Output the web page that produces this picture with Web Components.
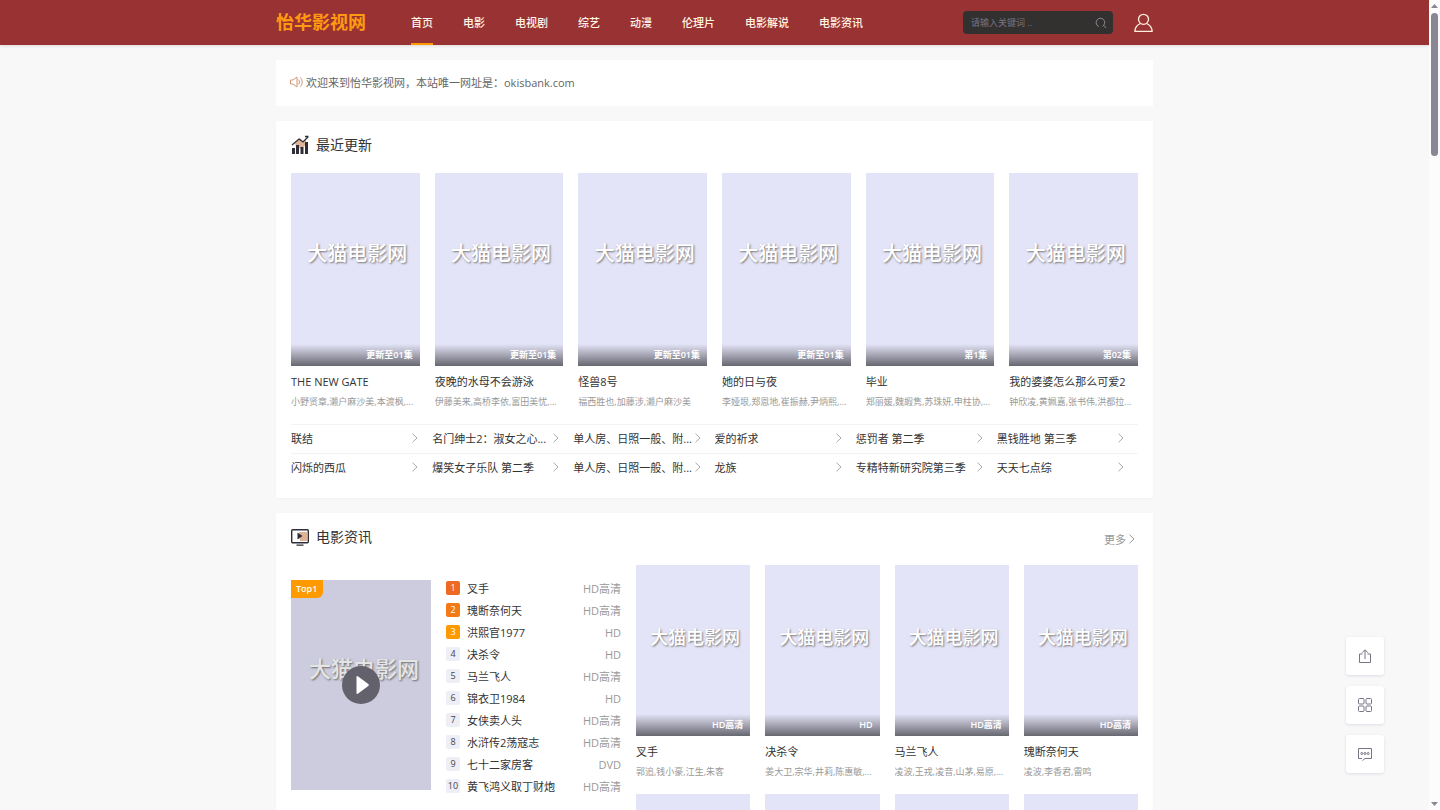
<!DOCTYPE html>
<html lang="zh-CN">
<head>
<meta charset="utf-8">
<title>怡华影视网</title>
<style>
  html { scrollbar-width: none; }
  body {
    margin: 0;
    padding-right: 11px;
    background: #f8f8f8;
    color: #333;
    font: 11px/15px "Open Sans", "Noto Sans CJK SC", sans-serif;
  }
  main {
    display: grid;
    gap: 15px;
    max-width: 877px;
    margin: 15px auto;
  }
  .six { display: grid; grid-template-columns: repeat(6, minmax(0, 1fr)); gap: 15px; --mark: 20px; }
  .four { display: grid; grid-template-columns: repeat(4, minmax(0, 1fr)); gap: 15px; --mark: 18px; }
  .split { display: grid; grid-template-columns: minmax(0, 165fr) minmax(0, 251fr); gap: 15px; }
</style>
</head>
<body>
<site-header></site-header>
<main>
  <notice-bar>欢迎来到怡华影视网，本站唯一网址是：okisbank.com</notice-bar>

  <content-panel heading="最近更新">
    <svg slot="icon" width="18" height="20" viewBox="0 0 18 20">
      <path d="M4 8L9 3l3 3 3-2v6l-5 4-5-2z" fill="#deb396"/>
      <path d="M1 13h3v6H1zM5 10h3v9H5zM9.500 12h3v7h-3zM14 7h3v12h-3z" fill="#2f2e38"/>
      <path d="M1 10L8 4l4 3 5-5M14 1.500h3.500" fill="none" stroke="#2f2e38" stroke-width="1.300"/>
    </svg>
    <div class="six">
      <movie-card name="THE NEW GATE" cast="小野贤章,濑户麻沙美,本渡枫,..." tag="更新至01集"></movie-card>
      <movie-card name="夜晚的水母不会游泳" cast="伊藤美来,高桥李依,富田美忧,..." tag="更新至01集"></movie-card>
      <movie-card name="怪兽8号" cast="福西胜也,加藤涉,濑户麻沙美" tag="更新至01集"></movie-card>
      <movie-card name="她的日与夜" cast="李娅垠,郑恩地,崔振赫,尹炳熙,..." tag="更新至01集"></movie-card>
      <movie-card name="毕业" cast="郑丽媛,魏嘏隽,苏珠妍,申柱协,..." tag="第1集"></movie-card>
      <movie-card name="我的婆婆怎么那么可爱2" cast="钟欣凌,黄姵嘉,张书伟,洪都拉..." tag="第02集"></movie-card>
    </div>
    <link-grid></link-grid>
  </content-panel>

  <content-panel heading="电影资讯" more="更多">
    <svg slot="icon" width="18" height="20" viewBox="0 0 18 20">
      <path d="M8 5h8v9H9z" fill="#deb396"/>
      <rect x="0.700" y="2.700" width="16.600" height="13" rx="1" fill="none" stroke="#2f2e38" stroke-width="1.400"/>
      <path d="M6.500 5.500v7l5-3.500zM5.500 17.500h7v1.300h-7z" fill="#2f2e38"/>
    </svg>
    <div class="split">
      <rank-list></rank-list>
      <div class="four">
        <movie-card name="叉手" cast="郭追,钱小豪,江生,朱客" tag="HD高清"></movie-card>
        <movie-card name="决杀令" cast="姜大卫,宗华,井莉,陈惠敏,..." tag="HD"></movie-card>
        <movie-card name="马兰飞人" cast="凌波,王戎,凌音,山茅,易原,..." tag="HD高清"></movie-card>
        <movie-card name="瑰断奈何天" cast="凌波,李香君,雷鸣" tag="HD高清"></movie-card>
        <poster-image></poster-image>
        <poster-image></poster-image>
        <poster-image></poster-image>
        <poster-image></poster-image>
      </div>
    </div>
  </content-panel>
</main>
<side-tools></side-tools>
<scroll-track></scroll-track>

<script>
const define = (name, render) => customElements.define(name, class extends HTMLElement {
  constructor() {
    super();
    this.attachShadow({ mode: "open" });
  }
  connectedCallback() {
    const template = document.createElement("template");
    template.innerHTML = render(this);
    this.shadowRoot.replaceChildren(template.content.cloneNode(true));
  }
});
const chevron = '<svg width="6" height="10" viewBox="0 0 6 10" fill="none" stroke="currentColor" aria-hidden="true"><path d="M0.500 0.700L5 5 0.500 9.300"/></svg>';

define("site-header", () => `
  <style>
    :host { display: block; background: #993333; box-shadow: 0 1px 3px rgba(0,0,0,.12); }
    .row { display: flex; align-items: center; max-width: 877px; height: 45px; margin: 0 auto; }
    a { color: #fff5e6; text-decoration: none; }
    .logo { color: #ff9911; font-size: 18px; line-height: 45px; font-weight: 700; }
    nav { display: flex; gap: 30px; margin-left: 45px; align-self: stretch; }
    nav a { line-height: 45px; font-weight: 500; box-sizing: border-box; height: 45px; white-space: nowrap; }
    nav a[aria-current] { border-bottom: 2px solid #ff9900; }
    form { display: flex; align-items: center; box-sizing: border-box; width: 150px; height: 23px; margin: 0 21px 0 auto; padding: 0 6px 0 8px; border-radius: 4px; background: #333030; }
    input { flex: 1; min-width: 0; padding: 0; border: 0; outline: 0; background: none; color: #ddd; font: inherit; font-size: 9px; }
    input::placeholder { color: #777482; }
    button { display: flex; padding: 0; border: 0; background: none; color: #8a8794; }
    .user { display: flex; }
  </style>
  <div class="row">
    <a class="logo" href="#">怡华影视网</a>
    <nav>${["首页", "电影", "电视剧", "综艺", "动漫", "伦理片", "电影解说", "电影资讯"]
      .map((t, i) => `<a href="#"${i ? "" : ' aria-current="page"'}>${t}</a>`).join("")}</nav>
    <form role="search">
      <input type="text" aria-label="搜索" placeholder="请输入关键词 ..">
      <button type="button" aria-label="搜索"><svg width="12" height="12" viewBox="0 0 12 12" fill="none" stroke="currentColor"><path d="M4 9.600A4.300 4.300 0 1 1 7.500 9.300M9 8.500l2 2.500"/></svg></button>
    </form>
    <a class="user" href="#" aria-label="用户"><svg width="19" height="20" viewBox="0 0 19 20" fill="none" stroke="#fff0e0" stroke-width="1.300"><circle cx="9.500" cy="6.300" r="5"/><path d="M6.500 10.500C3 12 1 14.500 0.900 18.300h17.200C18 14.500 16 12 12.500 10.500"/></svg></a>
  </div>`);

define("notice-bar", () => `
  <style>
    :host { display: flex; align-items: center; gap: 3px; height: 44px; padding: 0 14px 2px; background: #fff; color: #666; }
  </style>
  <svg width="13" height="12" viewBox="0 0 13 12" fill="none" stroke="#cf9878" aria-hidden="true"><path d="M0.500 4h2.500l4-3v10l-4-3H0.500zM8.700 3.500q1.800 2.500 0 5M10.500 1.500q3.500 4.500 0 9"/></svg>
  <span><slot></slot></span>`);

define("content-panel", el => `
  <style>
    :host { display: block; padding: 14px 15px 16px; background: #fff; box-shadow: 0 1px 2px rgba(0,0,0,.03); }
    header { display: flex; align-items: center; height: 20px; margin-bottom: 18px; }
    h2 { margin: 0 0 0 7px; font-size: 14px; line-height: 20px; font-weight: 400; color: #333; }
    ::slotted(svg) { display: block; }
    a { display: flex; align-items: center; gap: 3px; margin: 4px 3px 0 auto; color: #999; text-decoration: none; }
  </style>
  <header><slot name="icon"></slot><h2>${el.getAttribute("heading")}</h2>
    ${el.hasAttribute("more") ? `<a href="#">${el.getAttribute("more")}${chevron}</a>` : ""}
  </header>
  <slot></slot>`);

define("poster-image", () => `
  <style>
    :host { display: block; position: relative; aspect-ratio: 2 / 3; background: #e4e4f8; overflow: hidden; }
  </style>
  <slot></slot>`);

define("movie-card", el => `
  <style>
    :host { display: block; min-width: 0; }
    a { color: inherit; text-decoration: none; }
    .mark { position: absolute; top: 42%; left: 4px; right: 0; transform: translateY(-50%); text-align: center; white-space: nowrap;
      color: #fff; font-size: var(--mark); line-height: 28px; font-weight: 500; text-shadow: 1px 1px 2px #777; }
    .tag { position: absolute; left: 0; right: 0; bottom: 0; padding: 0 7px; text-align: right; color: #fff;
      font-size: 9px; line-height: 22px; font-weight: 600; background: linear-gradient(transparent, rgba(0,0,0,.55)); }
    h3, p { margin: 8px 0 0; font-size: 11px; line-height: 15px; font-weight: 400; white-space: nowrap; overflow: hidden; }
    p { margin-top: 5px; font-size: 9px; color: #999; }
  </style>
  <a href="#">
    <poster-image><span class="mark">大猫电影网</span><span class="tag">${el.getAttribute("tag")}</span></poster-image>
    <h3>${el.getAttribute("name")}</h3>
  </a>
  <p>${el.getAttribute("cast")}</p>`);

define("link-grid", () => `
  <style>
    :host { display: block; margin-top: 15px; }
    ul { display: grid; grid-template-columns: repeat(6, minmax(0, 1fr)); margin: 0; padding: 0; list-style: none; }
    a { display: flex; align-items: center; justify-content: space-between; height: 26px; padding: 0 14px 2px 0;
      border-top: 1px solid #f3f3f5; color: #333; text-decoration: none; white-space: nowrap; }
    svg { color: #aaa; flex: none; }
  </style>
  <ul>${["联结", "名门绅士2：淑女之心...", "单人房、日照一般、附...", "爱的祈求", "惩罚者 第二季", "黑钱胜地 第三季",
    "闪烁的西瓜", "爆笑女子乐队 第二季", "单人房、日照一般、附...", "龙族", "专精特新研究院第三季", "天天七点综"]
    .map(t => `<li><a href="#"><span>${t}</span>${chevron}</a></li>`).join("")}</ul>`);

define("rank-list", () => `
  <style>
    :host { display: grid; grid-template-columns: 140px minmax(0, 1fr); gap: 15px; align-items: start; }
    a { color: inherit; text-decoration: none; }
    .top { display: block; margin-top: 15px; }
    .mark { position: absolute; top: 42%; left: 6px; right: 0; transform: translateY(-50%); text-align: center; white-space: nowrap;
      color: #fff; font-size: 22px; line-height: 28px; font-weight: 500; text-shadow: 1px 1px 2px #777; }
    .shade { position: absolute; inset: 0; display: grid; place-items: center; background: rgba(0,0,0,.1); }
    .badge { position: absolute; top: 0; left: 0; padding: 0 6px 0 5px; border-radius: 0 0 6px 0; background: #ff9900; color: #fff; font-size: 9px; line-height: 18px; font-weight: 600; }
    ol { margin: 12px 0 0; padding: 0; list-style: none; }
    li { display: flex; align-items: center; height: 22px; white-space: nowrap; }
    .no { width: 14px; margin-right: 7px; border-radius: 2px; background: #eeeef6; color: #444; text-align: center; font-size: 9px; line-height: 14px; }
    li:nth-child(-n+3) .no { background: #ed6a22; color: #fff; }
    li:nth-child(2) .no { background: #f47a16; }
    li:nth-child(3) .no { background: #ff9900; }
    .kind { margin-left: auto; color: #999; }
  </style>
  <a class="top" href="#" aria-label="叉手">
    <poster-image>
      <span class="mark">大猫电影网</span>
      <span class="shade"><svg width="38" height="38" viewBox="0 0 38 38"><circle cx="19" cy="19" r="19" fill="#62616c"/><path d="M14.500 11v16q0 1.500 1.300.7L26.300 20q1.200-1 0-2L15.800 10.300q-1.300-.8-1.300.7z" fill="#fff"/></svg></span>
      <span class="badge">Top1</span>
    </poster-image>
  </a>
  <ol>${[["叉手", "HD高清"], ["瑰断奈何天", "HD高清"], ["洪熙官1977", "HD"], ["决杀令", "HD"], ["马兰飞人", "HD高清"],
    ["锦衣卫1984", "HD"], ["女侠卖人头", "HD高清"], ["水浒传2荡寇志", "HD高清"], ["七十二家房客", "DVD"], ["黄飞鸿义取丁财炮", "HD高清"]]
    .map(([name, kind], i) => `<li><span class="no">${i + 1}</span><a href="#">${name}</a><span class="kind">${kind}</span></li>`).join("")}</ol>`);

define("side-tools", () => `
  <style>
    :host { position: fixed; right: 56px; bottom: 37px; display: grid; gap: 11px; }
    button { display: grid; place-items: center; width: 38px; height: 38px; padding: 0; border: 0; border-radius: 3px; background: #fff; color: #777584; box-shadow: 0 1px 3px rgba(60,60,120,.14); }
    svg { fill: none; stroke: currentColor; }
  </style>
  <button type="button" aria-label="分享"><svg width="14" height="14" viewBox="0 0 14 14"><path d="M4.500 5H1.500v8.500h11V5h-3M7 10V1M4 3.800L7 0.800l3 3"/></svg></button>
  <button type="button" aria-label="二维码"><svg width="14" height="14" viewBox="0 0 14 14"><rect x="0.500" y="0.500" width="5.500" height="5.500" rx="1"/><rect x="8" y="0.500" width="5.500" height="5.500" rx="1"/><rect x="0.500" y="8" width="5.500" height="5.500" rx="1"/><rect x="8" y="8" width="5.500" height="5.500" rx="1"/></svg></button>
  <button type="button" aria-label="留言"><svg width="14" height="14" viewBox="0 0 14 14"><path d="M4 11.500H0.500v-10h13v10H7L4.500 13.500"/><circle cx="3.800" cy="6.500" r="1"/><circle cx="7" cy="6.500" r="1"/><circle cx="10.200" cy="6.500" r="1"/></svg></button>`);

define("scroll-track", () => `
  <style>
    :host { position: fixed; inset: 0 0 0 auto; width: 11px; box-sizing: border-box; display: flex; flex-direction: column; align-items: center; padding: 4px 0; background: #fcfcfc; }
    .thumb { width: 7px; height: 143px; margin: 5px 0 auto; border-radius: 4px; background: #888793; }
  </style>
  <svg width="7" height="4" viewBox="0 0 7 4"><path d="M0 4L3.500 0 7 4z" fill="#888793"/></svg>
  <div class="thumb"></div>
  <svg width="7" height="4" viewBox="0 0 7 4"><path d="M0 0L3.500 4 7 0z" fill="#888793"/></svg>`);
</script>
</body>
</html>
